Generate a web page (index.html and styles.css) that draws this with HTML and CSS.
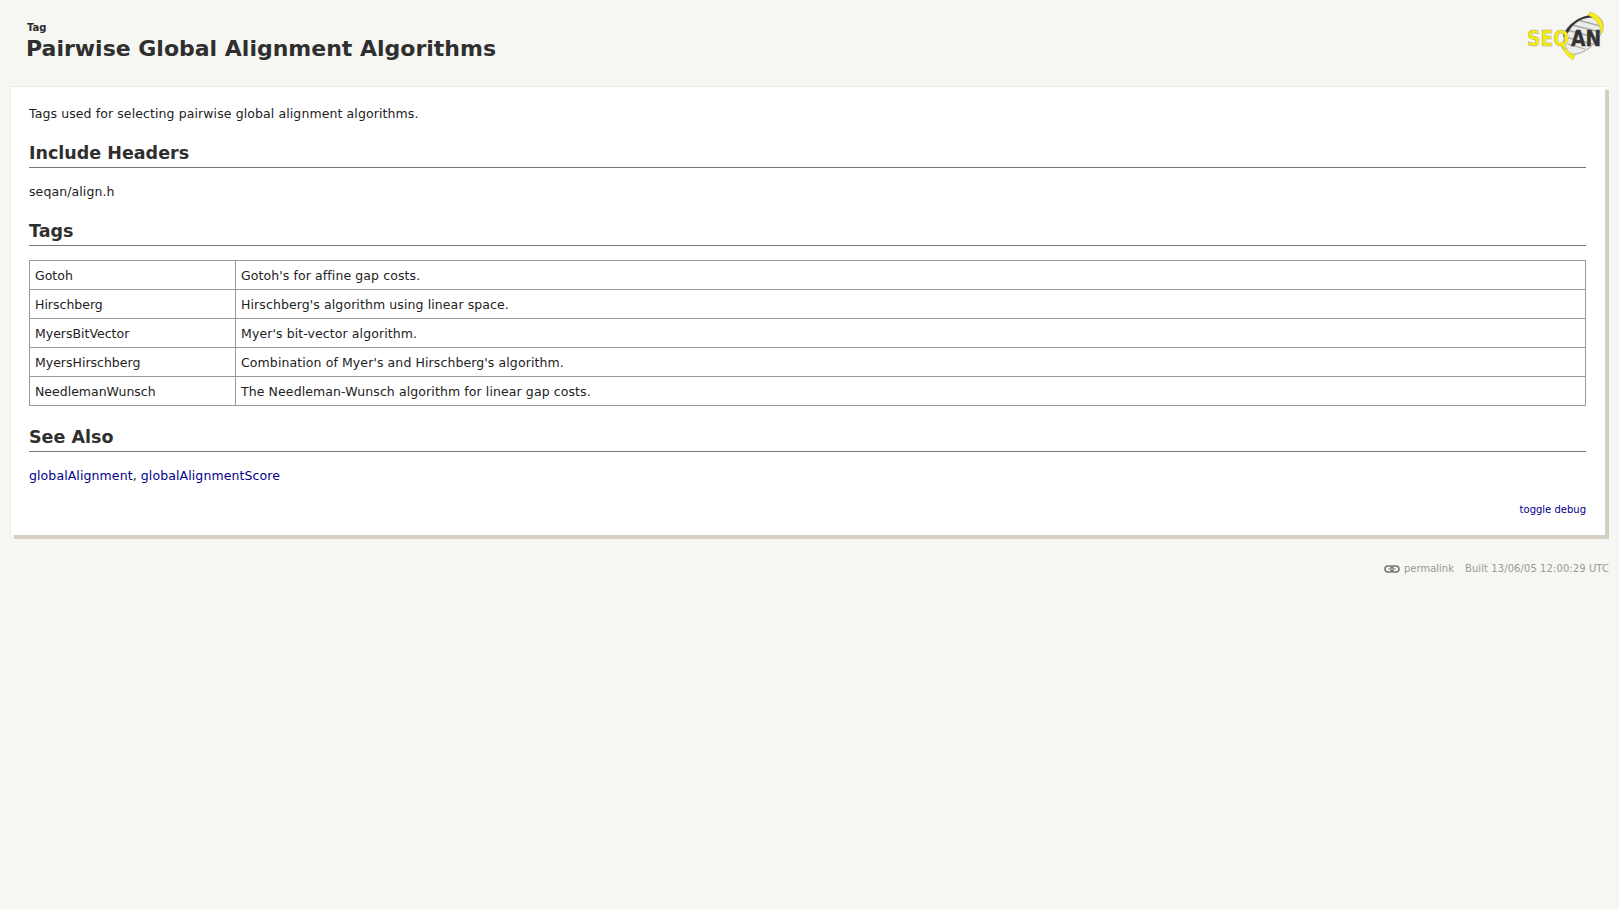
FILE: index.html
```html
<!DOCTYPE html>
<html lang="en">
<head>
<meta charset="utf-8">
<title>Pairwise Global Alignment Algorithms</title>
<link rel="stylesheet" href="styles.css">
</head>
<body>
<header class="top">
  <div class="titles">
    <div class="kind">Tag</div>
    <h1 class="title">Pairwise Global Alignment Algorithms</h1>
  </div>
  <svg class="logo" width="78" height="52" viewBox="0 0 78 52" aria-label="SeqAn logo">
    <ellipse cx="56" cy="24" rx="24" ry="14" transform="rotate(-43 56 24)" fill="#ececea" stroke="#999" stroke-width=".8"/>
    <path d="M41 33 L58 38 M38 26 L66 33 M40 19 L71 27 M45 14 L73 21 M51 9 L73 15" stroke="#a9a9a6" stroke-width="1.3" fill="none"/>
    <path d="M36 26 C38 16 50 5 65 4 C68 4 70 5 71 7 C60 5 50 9 44 17 L39 25 Z" fill="#3a3a3a"/>
    <path d="M63 1 C71 3 77 10 76 17 C76 20 75 22 74 23 C74 16 70 8 61 4 Z" fill="#f7ee1c" stroke="#b9b53a" stroke-width=".5"/>
    <path d="M34 34 C36 40 40 45 46 49 L48 44 C42 42 39 39 37 34 Z" fill="#f7ee1c" stroke="#b9b53a" stroke-width=".5"/>
    <text class="logo-seq" transform="translate(0 35) scale(.85 1)">SEQ</text>
    <text class="logo-an" transform="translate(44 35) scale(.85 1)">AN</text>
  </svg>
</header>
<main class="card">
  <p class="text">Tags used for selecting pairwise global alignment algorithms.</p>
  <h2 class="section">Include Headers</h2>
  <p class="text">seqan/align.h</p>
  <h2 class="section">Tags</h2>
  <table class="tags">
    <tr><td class="name">Gotoh</td><td>Gotoh's for affine gap costs.</td></tr>
    <tr><td class="name">Hirschberg</td><td>Hirschberg's algorithm using linear space.</td></tr>
    <tr><td class="name">MyersBitVector</td><td>Myer's bit-vector algorithm.</td></tr>
    <tr><td class="name">MyersHirschberg</td><td>Combination of Myer's and Hirschberg's algorithm.</td></tr>
    <tr><td class="name">NeedlemanWunsch</td><td>The Needleman-Wunsch algorithm for linear gap costs.</td></tr>
  </table>
  <h2 class="section">See Also</h2>
  <p class="text"><a href="#">globalAlignment</a>, <a href="#">globalAlignmentScore</a></p>
  <div class="debug"><a href="#">toggle debug</a></div>
</main>
<footer class="foot">
  <svg class="chain" width="16" height="8" viewBox="0 0 16 8" aria-hidden="true">
    <rect x="1" y="1" width="8" height="6" rx="3" fill="none" stroke="#777" stroke-width="1.6"/>
    <rect x="7" y="1" width="8" height="6" rx="3" fill="none" stroke="#777" stroke-width="1.6"/>
    <path d="M4 4 H12" stroke="#aaa" stroke-width="1.4"/>
  </svg>
  <span class="plink">permalink</span>
  <span class="built">Built 13/06/05 12:00:29 UTC</span>
</footer>
</body>
</html>
```

FILE: styles.css
```css
* { box-sizing: border-box; }
html, body { margin: 0; padding: 0; }
body {
  background: #f6f6f2;
  color: #2b2b2b;
  font-family: "DejaVu Sans", sans-serif;
  min-height: 909px;
}
a { color: #00008b; text-decoration: none; }

.top {
  height: 86px;
  display: flex;
  justify-content: space-between;
  align-items: flex-start;
  padding: 21px 14px 0 26px;
}
.kind { font-size: 10px; font-weight: bold; line-height: 14px; margin-left: 1px; }
.title {
  margin: 0;
  font-size: 22px;
  line-height: 28px;
  font-weight: bold;
  color: #2f2f2f;
}
.logo { margin-top: -10px; }
.logo-seq, .logo-an { font-family: "DejaVu Sans", sans-serif; font-weight: bold; font-size: 22px; }
.logo-seq { fill: #f7ee00; stroke: #a5a5a0; stroke-width: .5; }
.logo-an { fill: #333; stroke: #333; stroke-width: .4; }

.card {
  margin: 0 14px 0 10px;
  height: 449px;
  padding: 17px 19px 0 18px;
  background: #fff;
  box-shadow: 4px 4px 0 #d3cfc1;
  border: 1px solid #ecece8;
  border-width: 1px 0 0 1px;
}
.text {
  margin: 0;
  font-size: 12.5px;
  line-height: 20px;
  letter-spacing: .1px;
  color: #222;
}
.section {
  margin: 16px 0 14px;
  font-size: 17.5px;
  line-height: 27px;
  font-weight: bold;
  border-bottom: 1px solid #777;
  color: #2f2f2f;
}
.tags {
  width: 100%;
  border-collapse: collapse;
  margin: 0 0 18px;
  font-size: 12.5px;
  letter-spacing: .1px;
  color: #222;
}
.tags td {
  border: 1px solid #999;
  height: 29px;
  padding: 0 5px;
}
.tags .name { width: 206px; letter-spacing: 0; }
.debug {
  margin-top: 17px;
  text-align: right;
  font-size: 10px;
  line-height: 14px;
}

.foot {
  display: flex;
  justify-content: flex-end;
  align-items: center;
  margin-top: 27px;
  padding-right: 10px;
  font-size: 10px;
  line-height: 14px;
  color: #999;
}
.chain { margin-right: 4px; }
.plink { margin-right: 11px; }
.built { letter-spacing: .08px; }
```
